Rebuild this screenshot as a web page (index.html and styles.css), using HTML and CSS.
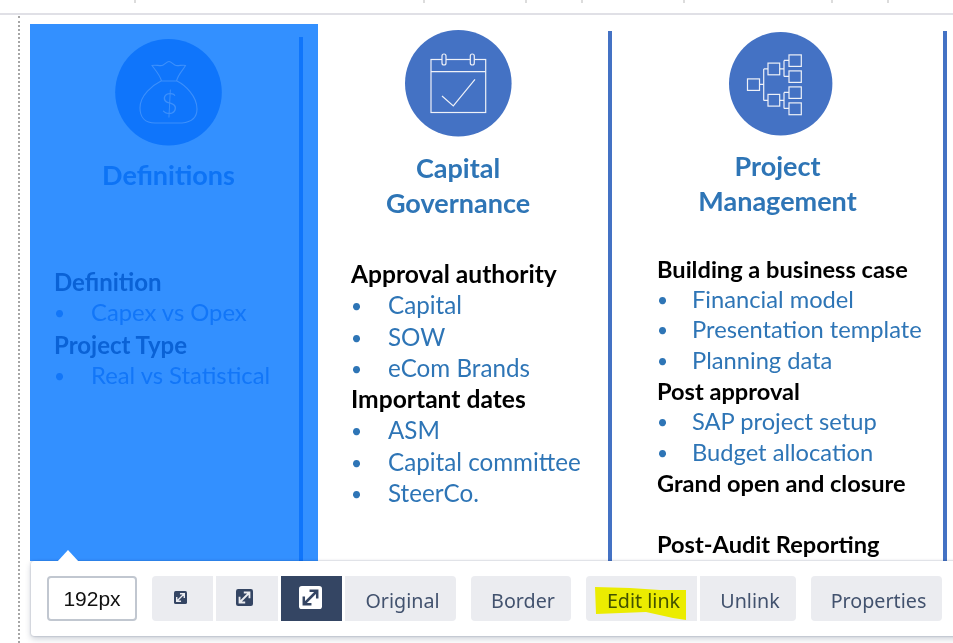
FILE: index.html
```html
<!DOCTYPE html>
<html lang="en">
<head>
<meta charset="utf-8">
<title>Image toolbar</title>
<link rel="stylesheet" href="styles.css">
</head>
<body>
<div class="page">
  <div class="ruler"><i></i><i></i><i></i><i></i><i></i><i></i><i></i></div>
  <div class="canvas">
    <section class="col col-def">
      <div class="col-inner">
        <div class="head">
          <svg class="icon" viewBox="115 39 107 107" width="107" height="107">
            <circle cx="168.5" cy="92.3" r="53.3" class="disc"/>
            <path class="line" d="M152 65.5c3-1 7 .5 10 0 2-.5 5-4 7-4s5 3.500 7 4c3 .5 7-1 9.500 0-2 4-7 8-9 15.500h-15c-1.500-6-7-12-9.500-15.500z"/>
            <path class="line" d="M161 81c-8 4-21 14-21 27 0 9 5 15 15 15h27c10-1 15-6 15-14 0-13-12-24-20-28"/>
            <text x="169.500" y="114" class="dollar">$</text>
          </svg>
          <h2>Definitions</h2>
        </div>
        <div class="list">
          <p class="b">Definition</p>
          <p class="i"><span>•</span>Capex vs Opex</p>
          <p class="b">Project Type</p>
          <p class="i"><span>•</span>Real vs Statistical</p>
        </div>
      </div>
    </section>
    <section class="col col-cap">
      <div class="head">
        <svg class="icon" viewBox="405 30 107 107" width="107" height="107">
          <circle cx="458.300" cy="83.300" r="53.300" class="disc"/>
          <rect class="wline" x="431" y="59.500" width="54.700" height="53"/>
          <path class="wline" d="M431 71.700h54.700"/>
          <rect class="wline ring" x="442" y="54" width="4" height="11" rx="2"/>
          <rect class="wline ring" x="470.300" y="54" width="4" height="11" rx="2"/>
          <path class="wline" d="M442 96l11.300 10 21.700-26.700"/>
        </svg>
        <h2>Capital<br>Governance</h2>
      </div>
      <div class="list">
        <p class="b">Approval authority</p>
        <p class="i"><span>•</span>Capital</p>
        <p class="i"><span>•</span>SOW</p>
        <p class="i"><span>•</span>eCom Brands</p>
        <p class="b">Important dates</p>
        <p class="i"><span>•</span>ASM</p>
        <p class="i"><span>•</span>Capital committee</p>
        <p class="i"><span>•</span>SteerCo.</p>
      </div>
    </section>
    <section class="col col-pm">
      <div class="head">
        <svg class="icon" viewBox="729 31.600 104 104" width="104" height="104">
          <circle cx="780.700" cy="83.300" r="51.700" class="disc"/>
          <g class="wline">
            <rect x="747.500" y="78.500" width="12" height="11.500"/>
            <rect x="768" y="62.700" width="11.700" height="11.700"/>
            <rect x="768" y="94" width="11.700" height="11.700"/>
            <rect x="789" y="54.500" width="12.300" height="11.500"/>
            <rect x="789" y="70.500" width="12.300" height="11.500"/>
            <rect x="789" y="86.500" width="12.300" height="11.500"/>
            <rect x="789" y="102.500" width="12.300" height="11.800"/>
            <path d="M759.500 84h4.500M763.700 68.500v31.500M763.700 68.500h4.300M763.700 100h4.300M779.700 68.500h4.300M784 60v16M784 60h5M784 76h5M779.700 100h4.300M784 92v16M784 92h5M784 108h5"/>
          </g>
        </svg>
        <h2>Project<br>Management</h2>
      </div>
      <div class="list">
        <p class="b">Building a business case</p>
        <p class="i"><span>•</span>Financial model</p>
        <p class="i"><span>•</span>Presentation template</p>
        <p class="i"><span>•</span>Planning data</p>
        <p class="b">Post approval</p>
        <p class="i"><span>•</span>SAP project setup</p>
        <p class="i"><span>•</span>Budget allocation</p>
        <p class="b">Grand open and closure</p>
        <p class="b">&nbsp;</p>
        <p class="b">Post-Audit Reporting</p>
      </div>
    </section>
  </div>
  <div class="toolbar">
    <div class="notch"></div>
    <div class="size">192px</div>
    <div class="group">
      <button class="btn w61 first"><svg class="ico" width="13" height="13" viewBox="0 0 24 24"><rect width="24" height="24" rx="3" class="ico-bg"/><path class="ico-ar" d="M6 18L18 6M11 5h8v8M5 11v8h8"/></svg></button>
      <button class="btn w62"><svg class="ico" width="17" height="17" viewBox="0 0 24 24"><rect width="24" height="24" rx="3" class="ico-bg"/><path class="ico-ar" d="M6 18L18 6M11 5h8v8M5 11v8h8"/></svg></button>
      <button class="btn w61 on"><svg class="ico" width="23" height="23" viewBox="0 0 24 24"><rect width="24" height="24" rx="3" class="ico-bg-w"/><path class="ico-ar-d" d="M6 18L18 6M11 5h8v8M5 11v8h8"/></svg></button>
      <button class="btn w111 last">Original</button>
    </div>
    <div class="group">
      <button class="btn w100 first last">Border</button>
    </div>
    <div class="group">
      <button class="btn w111 first">Edit link</button>
      <button class="btn w96 last">Unlink</button>
    </div>
    <div class="group">
      <button class="btn w131 first last">Properties</button>
    </div>
    <svg class="marker" width="100" height="40" viewBox="0 0 100 40"><path d="M2 1l35 1 30 2 26 0v30l-13-2-27-6-50 2z"/></svg>
  </div>
</div>
</body>
</html>
```
FILE: styles.css
```css
* { box-sizing: border-box; }
html, body { margin: 0; padding: 0; background: #fff; }
.page { position: relative; width: 953px; height: 643px; overflow: hidden; font-family: "Lato", sans-serif; }

.ruler { height: 15px; border-bottom: 2px solid #e0e0e6; display: flex; align-items: flex-start; }
.ruler i { display: block; height: 3px; border-right: 2px solid #dcdcdc; }
.ruler i:nth-child(1) { width: 136px; }
.ruler i:nth-child(2) { width: 289px; }
.ruler i:nth-child(3) { width: 102px; }
.ruler i:nth-child(4) { width: 56px; }
.ruler i:nth-child(5) { width: 102px; }
.ruler i:nth-child(6) { width: 148px; }
.ruler i:nth-child(7) { width: 56px; }

.canvas { margin: 1px 0 0 18px; height: 627px; padding: 8px 0 0 10px; border-left: 2px dotted #a6a6a6; display: flex; align-items: flex-start; }

.col { display: flex; flex-direction: column; }
.col-def { width: 288px; height: 537px; background: #3390ff; }
.col-inner { width: 273px; margin-top: 13px; border-right: 4px solid #0f75fb; flex: 1; }
.col-cap { width: 294px; height: 530px; margin-top: 7px; border-right: 4px solid #4472c4; }
.col-pm { width: 335px; height: 530px; margin-top: 7px; border-right: 4px solid #4472c4; }

.head { display: flex; flex-direction: column; align-items: center; }
.col-def .head { padding-left: 8px; }
.col-cap .head { padding-right: 10px; }
.icon { display: block; flex: none; }
.col-def .icon { margin-top: 2px; }
.col-cap .icon { margin-top: -1px; }
.col-pm .icon { margin-top: 1px; margin-left: 6px; }

h2 { margin: 0; font-size: 27px; line-height: 35px; font-weight: 700; text-align: center; color: #2e75b6; }
.col-def h2 { color: #0d73f5; margin-top: 11px; }
.col-cap h2 { margin-top: 13px; }
.col-pm h2 { margin-top: 12px; }

.disc { fill: #4472c4; }
.col-def .disc { fill: #0f75fb; }
.line { fill: none; stroke: #3d90fb; stroke-width: 1.1; }
.dollar { font-family: "Lato", sans-serif; font-size: 30px; font-weight: 300; text-anchor: middle; fill: #3d90fb; }
.wline { fill: none; stroke: #eef1f8; stroke-width: 1.200; }
.ring { fill: #4472c4; }

.list p { margin: 0; white-space: nowrap; }
.list .b { font-weight: 700; color: #000; }
.list .i { color: #2e75b6; }
.list .i span { display: inline-block; font-size: 19px; line-height: 1; vertical-align: 1px; }
.col-def .list { font-size: 23.800px; padding: 0 0 0 24px; margin-top: 74px; line-height: 31.300px; }
.col-def .list .b { font-size: 24px; color: #0a62d6; }
.col-def .list .i { color: #1276f8; }
.col-def .i span { width: 37px; }
.col-cap .list { font-size: 24.200px; padding-left: 33px; margin-top: 38px; line-height: 31.300px; }
.col-cap .list .b { font-size: 24.600px; }
.col-cap .i span { width: 37px; }
.col-pm .list { font-size: 23.700px; padding-left: 45px; margin-top: 36px; line-height: 30.600px; }
.col-pm .list .b { font-size: 23.600px; }
.col-pm .i { margin: -1px 0 1px; }
.col-pm .i span { width: 35px; }

.toolbar { position: absolute; left: 31px; top: 561px; width: 940px; height: 75px; padding: 15px 0 0 16px; background: #fff; display: flex; gap: 15px; border-radius: 3px; box-shadow: 0 0 2px rgba(9,30,66,.35), 0 3px 6px rgba(9,30,66,.2); }
.notch { position: absolute; left: 26px; top: -11px; width: 0; height: 0; border-left: 11px solid transparent; border-right: 11px solid transparent; border-bottom: 12px solid #fff; }
.size { width: 90px; height: 45px; border: 2px solid #c1c7d0; border-radius: 4px; font: 21px/41px "Liberation Sans", sans-serif; color: #111; text-align: center; }
.group { display: flex; gap: 3px; height: 45px; }
.btn { height: 45px; border: 0; margin: 0; padding: 5px 0 0 4px; background: #ebecf0; color: #42526e; font: 400 19.700px/40px "Noto Sans", sans-serif; display: flex; align-items: center; justify-content: center; }
.first { border-radius: 4px 0 0 4px; }
.last { border-radius: 0 4px 4px 0; }
.first.last { border-radius: 4px; }
.on { background: #344563; }
.w61 { width: 61px; padding: 0; }
.w62 { width: 62px; padding: 0; }
.w96 { width: 96px; }
.w100 { width: 100px; }
.w111 { width: 111px; }
.w131 { width: 131px; }
.ico { display: block; margin-top: -2px; }
.w61.first .ico { margin-left: -5px; }
.w62 .ico { margin-left: -5px; }
.on .ico { margin-left: -2px; }
.ico-bg { fill: #344563; }
.ico-bg-w { fill: #fff; }
.ico-ar { fill: none; stroke: #ebecf0; stroke-width: 2.600; }
.ico-ar-d { fill: none; stroke: #344563; stroke-width: 2.600; }
.marker { position: absolute; left: 562px; top: 25px; mix-blend-mode: multiply; }
.marker path { fill: #ffff00; }
```
